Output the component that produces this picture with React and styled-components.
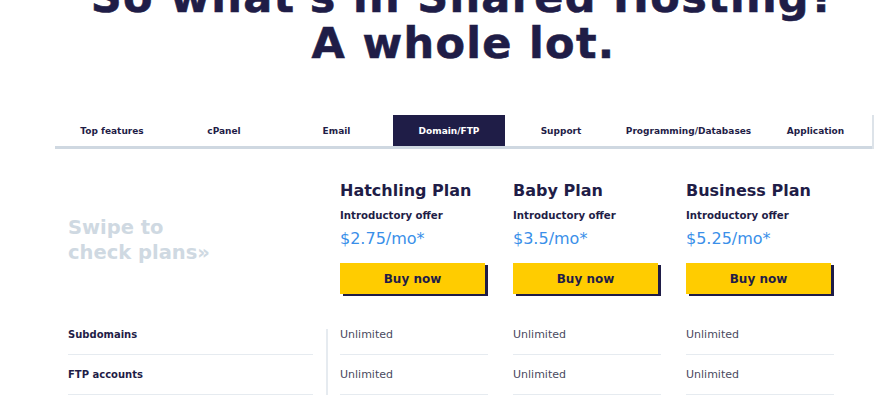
import styled, { createGlobalStyle } from "styled-components";

const GlobalStyle = createGlobalStyle`
  body {
    margin: 0;
    background: #ffffff;
    font-family: "DejaVu Sans", "Liberation Sans", sans-serif;
    color: #1f1d47;
    overflow: hidden;
  }
`;

const tabs = [
  { label: "Top features", width: 112 },
  { label: "cPanel", width: 112 },
  { label: "Email", width: 113 },
  { label: "Domain/FTP", width: 112, active: true },
  { label: "Support", width: 112 },
  { label: "Programming/Databases", width: 143 },
  { label: "Application", width: 111 },
];

const plans = [
  { name: "Hatchling Plan", price: "$2.75/mo*" },
  { name: "Baby Plan", price: "$3.5/mo*" },
  { name: "Business Plan", price: "$5.25/mo*" },
];

const features = ["Subdomains", "FTP accounts"];

function App() {
  return (
    <>
      <GlobalStyle />
      <Page>
        <Title>
          So what's in Shared Hosting?
          <br />
          A whole lot.
        </Title>

        <TabBar>
          {tabs.map((tab) => (
            <Tab key={tab.label} $width={tab.width} $active={tab.active}>
              {tab.label}
            </Tab>
          ))}
        </TabBar>

        <Table>
          <HeaderRow>
            <Swipe>
              Swipe to
              <br />
              check plans»
            </Swipe>
            <Plans>
              {plans.map((plan) => (
                <PlanHead key={plan.name}>
                  <PlanName>{plan.name}</PlanName>
                  <Offer>Introductory offer</Offer>
                  <Price>{plan.price}</Price>
                  <BuyButton>Buy now</BuyButton>
                </PlanHead>
              ))}
            </Plans>
          </HeaderRow>

          <Body>
            <Labels>
              {features.map((f) => (
                <LabelCell key={f}>{f}</LabelCell>
              ))}
            </Labels>
            <Divider />
            <Values>
              {features.map((f) =>
                plans.map((p) => <ValueCell key={f + p.name}>Unlimited</ValueCell>)
              )}
            </Values>
          </Body>
        </Table>
      </Page>
    </>
  );
}

const Page = styled.div`
  margin-left: 55px;
  width: 817px;
`;

const Title = styled.h1`
  margin: -26px 0 0 0;
  font-size: 43px;
  line-height: 46px;
  font-weight: 700;
  letter-spacing: 1.3px;
  text-align: center;
  color: #1f1d47;
  -webkit-text-stroke: 0.6px #1f1d47;
`;

const TabBar = styled.div`
  display: flex;
  margin-top: 49px;
  padding-left: 1px;
  border-bottom: 3px solid #cfd8e1;
  box-shadow: 2px 0 0 #dde3e9;
`;

const Tab = styled.div`
  width: ${(p) => p.$width}px;
  height: 31px;
  display: flex;
  align-items: center;
  justify-content: center;
  font-size: 9px;
  font-weight: 700;
  color: ${(p) => (p.$active ? "#ffffff" : "#1f1d47")};
  background: ${(p) => (p.$active ? "#1f1d47" : "transparent")};
`;

const Table = styled.div`
  padding-left: 13px;
`;

const HeaderRow = styled.div`
  display: flex;
  margin-top: 32px;
`;

const Swipe = styled.div`
  width: 245px;
  margin-right: 27px;
  margin-top: 34px;
  font-size: 19.5px;
  line-height: 25px;
  font-weight: 700;
  color: #cfd9e2;
`;

const Plans = styled.div`
  display: grid;
  grid-template-columns: repeat(3, 148px);
  column-gap: 25px;
`;

const PlanHead = styled.div`
  display: flex;
  flex-direction: column;
  align-items: flex-start;
`;

const PlanName = styled.div`
  font-size: 16px;
  line-height: 20px;
  font-weight: 700;
  color: #1f1d47;
`;

const Offer = styled.div`
  margin-top: 8px;
  font-size: 10.2px;
  line-height: 14px;
  font-weight: 700;
  color: #1f1d47;
`;

const Price = styled.div`
  margin-top: 7px;
  font-size: 16px;
  line-height: 18px;
  color: #3a8fe9;
`;

const BuyButton = styled.button`
  margin-top: 15px;
  width: 145px;
  height: 31px;
  border: none;
  background: #ffcc00;
  box-shadow: 3px 2px 0 #1f1d47;
  font-family: inherit;
  font-size: 12px;
  font-weight: 700;
  color: #1f1d47;
  cursor: pointer;
`;

const Body = styled.div`
  display: flex;
  margin-top: 21px;
`;

const Labels = styled.div`
  width: 245px;
`;

const cell = `
  height: 40px;
  box-sizing: border-box;
  padding-top: 13px;
  line-height: 14px;
  border-bottom: 1px solid #e6ebf0;
`;

const LabelCell = styled.div`
  ${cell}
  font-size: 10px;
  font-weight: 700;
  color: #1f1d47;
`;

const Divider = styled.div`
  width: 2px;
  margin: 14px 12px 0 13px;
  background: #e6ebf0;
`;

const Values = styled.div`
  display: grid;
  grid-template-columns: repeat(3, 148px);
  column-gap: 25px;
  align-content: start;
`;

const ValueCell = styled.div`
  ${cell}
  font-size: 11px;
  color: #4a4a5e;
`;

export default App;
